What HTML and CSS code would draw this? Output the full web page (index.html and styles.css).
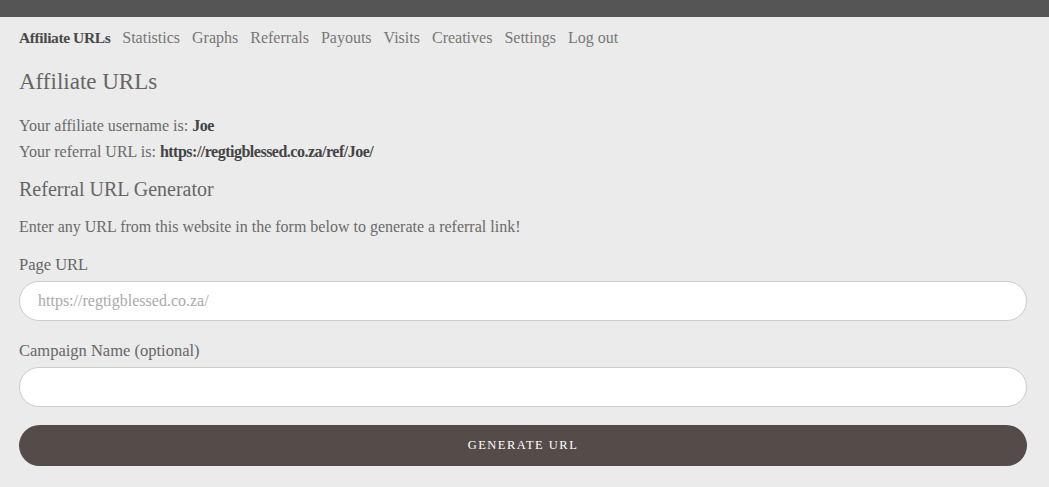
FILE: index.html
```html
<!DOCTYPE html>
<html lang="en">
<head>
    <meta charset="utf-8">
    <title>Affiliate URLs</title>
    <link rel="stylesheet" href="styles.css">
</head>
<body>
    <div class="topbar"></div>

    <div class="page">
        <ul class="tabs">
            <li class="active">Affiliate URLs</li>
            <li>Statistics</li>
            <li>Graphs</li>
            <li>Referrals</li>
            <li>Payouts</li>
            <li>Visits</li>
            <li>Creatives</li>
            <li>Settings</li>
            <li>Log out</li>
        </ul>

        <h2>Affiliate URLs</h2>

        <p class="info">Your affiliate username is: <strong>Joe</strong></p>
        <p class="info">Your referral URL is: <strong>https://regtigblessed.co.za/ref/Joe/</strong></p>

        <h3>Referral URL Generator</h3>

        <p class="note">Enter any URL from this website in the form below to generate a referral link!</p>

        <form class="generator">
            <label for="pageUrl">Page URL</label>
            <input type="text" id="pageUrl" placeholder="https://regtigblessed.co.za/">

            <label for="campaign">Campaign Name (optional)</label>
            <input type="text" id="campaign">

            <button type="button">Generate URL</button>
        </form>
    </div>
</body>
</html>
```

FILE: styles.css
```css
body {
    margin: 0;
    background: #ebebeb;
    font-family: "Liberation Serif", serif;
    color: #6a6a6a;
}

.topbar {
    height: 17px;
    background: #555;
}

.page {
    padding: 0 22px 0 19px;
}

.tabs {
    list-style: none;
    margin: 0;
    padding: 11px 0 0;
    display: flex;
    align-items: baseline;
    gap: 12px;
    font-size: 16px;
    line-height: 20px;
}

.tabs li {
    color: #777;
}

.tabs li.active {
    color: #4a4a4a;
    font-weight: bold;
    font-size: 15.5px;
    letter-spacing: -0.4px;
}

h2 {
    margin: 19px 0 0;
    font-weight: normal;
    font-size: 23px;
    line-height: 30px;
    color: #666;
}

.info {
    margin: 0;
    font-size: 16px;
    line-height: 26px;
}

.info:first-of-type {
    margin-top: 16px;
}

.info strong {
    color: #444;
    letter-spacing: -0.5px;
}

h3 {
    margin: 11px 0 0;
    font-weight: normal;
    font-size: 20px;
    line-height: 26px;
    color: #666;
}

.note {
    margin: 15px 0 0;
    font-size: 16px;
    line-height: 20px;
}

.generator {
    display: flex;
    flex-direction: column;
}

.generator label {
    margin-top: 18px;
    font-size: 16.5px;
    line-height: 20px;
    color: #666;
}

.generator input {
    margin-top: 6px;
    height: 40px;
    box-sizing: border-box;
    border: 1px solid #ccc;
    border-radius: 20px;
    background: #fff;
    padding: 0 18px;
    font-family: inherit;
    font-size: 16px;
    color: #555;
}

.generator input::placeholder {
    color: #aaa;
}

.generator input + label {
    margin-top: 20px;
}

.generator button {
    margin-top: 18px;
    height: 41px;
    border: none;
    border-radius: 21px;
    background: #554c4a;
    color: #fff;
    font-family: inherit;
    font-size: 12.5px;
    letter-spacing: 1.5px;
    text-transform: uppercase;
}
```
